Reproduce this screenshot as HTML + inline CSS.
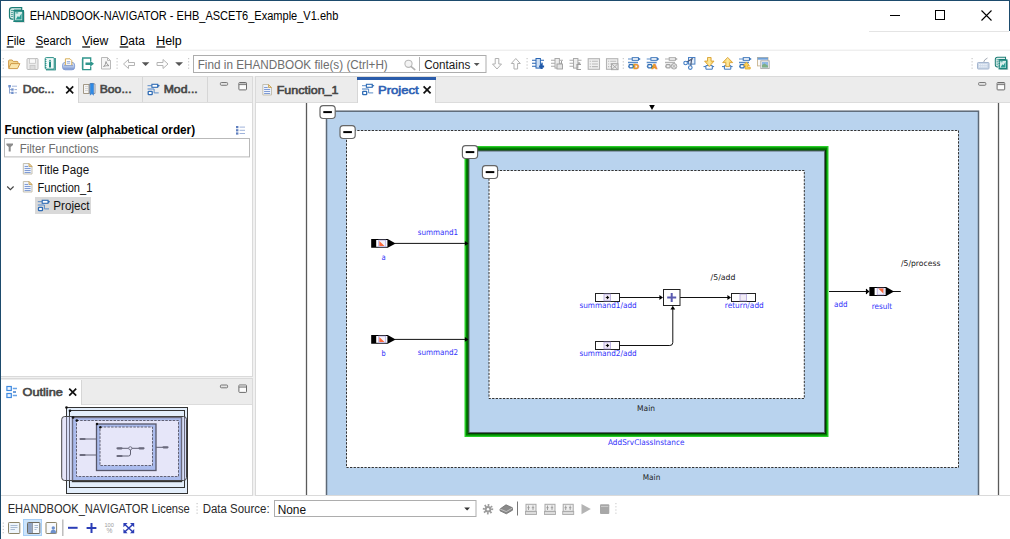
<!DOCTYPE html>
<html lang="en">
<head>
<meta charset="utf-8">
<title>EHANDBOOK-NAVIGATOR - EHB_ASCET6_Example_V1.ehb</title>
<style>
html,body{margin:0;padding:0;background:#fff;}
body{width:1010px;height:539px;overflow:hidden;position:relative;font-family:"Liberation Sans", sans-serif;}
#win{position:absolute;left:0;top:0;width:1010px;height:539px;overflow:hidden;background:#fff;}
#win div{position:absolute;}
svg{position:absolute;left:0;top:0;font-family:"Liberation Sans", sans-serif;}
svg text{white-space:pre;}
#editor{position:absolute;left:256px;top:103px;width:754px;height:392px;overflow:hidden;}
#editor svg{left:-256px;top:-103px;}
</style>
</head>
<body>
<div id="win">
<div style="left:869px;top:31px;width:140px;height:1px;background:#e4e4e4;"></div>
<div class="workbench" style="left:1px;top:76px;width:1009px;height:420px;background:#f1f1f1;"></div>
<div style="left:1px;top:49px;width:1009px;height:1px;background:#f8f8f8;"></div>
<div style="left:1px;top:50px;width:1009px;height:1px;background:#efefef;"></div>
<div class="panel" style="left:0px;top:76px;width:253px;height:301px;background:#fff;border:1px solid #dadada;box-sizing:border-box"><div class="tabbar" style="left:0;top:0;width:100%;height:26px;background:#ececec;border-bottom:1px solid #dcdcdc;box-sizing:border-box"></div></div>
<div class="panel" style="left:0px;top:378px;width:253px;height:118px;background:#fff;border:1px solid #dadada;box-sizing:border-box"><div class="tabbar" style="left:0;top:0;width:100%;height:26px;background:#ececec;border-bottom:1px solid #dcdcdc;box-sizing:border-box"></div></div>
<div class="panel" style="left:255px;top:76px;width:760px;height:420px;background:#fff;border:1px solid #dadada;box-sizing:border-box"><div class="tabbar" style="left:0;top:0;width:100%;height:26px;background:#ececec;border-bottom:1px solid #dcdcdc;box-sizing:border-box"></div></div>
<div class="tab active" style="left:1px;top:78px;width:78px;height:25px;background:#fff;border-right:1px solid #d6d6d6;box-sizing:border-box"></div>
<div class="tab active" style="left:1px;top:380px;width:81px;height:25px;background:#fff;border-right:1px solid #d6d6d6;box-sizing:border-box"></div>
<div class="tab active" style="left:357px;top:77px;width:79px;height:26px;background:#fff;border-right:1px solid #d6d6d6;border-left:1px solid #d6d6d6;box-sizing:border-box"></div>
<div style="left:357px;top:77px;width:79px;height:3px;background:#2a5caa;"></div>
<div style="left:142px;top:77px;width:1px;height:25px;background:#d6d6d6;"></div>
<div style="left:207px;top:77px;width:1px;height:25px;background:#d6d6d6;"></div>
<div class="statusbar" style="left:1px;top:496px;width:1009px;height:43px;background:#fff;"></div>
<div class="selected" style="left:35px;top:197px;width:56px;height:17px;background:#d9d9d9"></div>
<div class="winborder" style="left:0px;top:0px;width:1010px;height:1px;background:#1d4b6d;"></div>
<div class="winborder" style="left:0px;top:0px;width:1px;height:539px;background:#1d4b6d;"></div>
<div class="winborder" style="left:1009px;top:0px;width:1px;height:31px;background:#1d4b6d;"></div>
<div id="editor">
<svg width="1010" height="539" viewBox="0 0 1010 539">
<path d="M306.5 103v392M998.5 103v392" stroke="#5a5a5a" stroke-width="1.3"/>
<path d="M649.2 104.9h5.6l-2.8 5.2z" fill="#000"/>
<rect x="326.5" y="111.2" width="652" height="400" fill="#b9d3ee" stroke="#5c6876" stroke-width="1.5"/>
<rect x="346.5" y="130.5" width="612" height="337" fill="#fff" stroke="#333" stroke-width="1" stroke-dasharray="2.3 1.3"/>
<rect x="464.5" y="146" width="364" height="291" fill="#28d028"/>
<rect x="465.9" y="147.4" width="361.3" height="288.2" fill="#008000"/>
<rect x="468.2" y="150.2" width="357.3" height="283.3" fill="none" stroke="#063806" stroke-width="1"/>
<rect x="469" y="151" width="355.5" height="281.5" fill="#b9d3ee" stroke="#5a6672" stroke-width="1"/>
<rect x="489" y="170.5" width="315.3" height="228" fill="#fff" stroke="#333" stroke-width="1" stroke-dasharray="2.3 1.3"/>
<rect x="320.0" y="105.69999999999999" width="15.2" height="12.8" rx="3.2" fill="#fff" stroke="#666" stroke-width="1.2"/><path d="M323.3 112.1h8.6" stroke="#000" stroke-width="2"/>
<rect x="340.0" y="125.69999999999999" width="15.2" height="12.8" rx="3.2" fill="#fff" stroke="#666" stroke-width="1.2"/><path d="M343.3 132.1h8.6" stroke="#000" stroke-width="2"/>
<rect x="462.4" y="145.7" width="15.2" height="12.8" rx="3.2" fill="#fff" stroke="#666" stroke-width="1.2"/><path d="M465.7 152.1h8.6" stroke="#000" stroke-width="2"/>
<rect x="482.4" y="165.7" width="15.2" height="12.8" rx="3.2" fill="#fff" stroke="#666" stroke-width="1.2"/><path d="M485.7 172.1h8.6" stroke="#000" stroke-width="2"/>
<g transform="translate(371,243.4)"><path d="M0.2 -4.4h16.5l8 4.4-8 4.4h-16.5z" fill="#000"/><rect x="5.2" y="-3.4" width="11.2" height="6.8" fill="#fff"/><rect x="7.7" y="-3.3" width="7" height="6.6" fill="#f4f2fa" stroke="#b4ace2" stroke-width="0.8"/><path d="M8.3 -2.4v5h5.2z" fill="#fa6a3c"/></g>
<g transform="translate(371,339.4)"><path d="M0.2 -4.4h16.5l8 4.4-8 4.4h-16.5z" fill="#000"/><rect x="5.2" y="-3.4" width="11.2" height="6.8" fill="#fff"/><rect x="7.7" y="-3.3" width="7" height="6.6" fill="#f4f2fa" stroke="#b4ace2" stroke-width="0.8"/><path d="M8.3 -2.4v5h5.2z" fill="#fa6a3c"/></g>
<path d="M395 243.4h70M395 339.4h70" stroke="#111" stroke-width="1"/>
<path d="M468.5 243.4l-3.6-2.4v4.8zM468.5 339.4l-3.6-2.4v4.8z" fill="#000"/>
<text x="417.8" y="235" font-size="7.9" font-family="DejaVu Sans Condensed, DejaVu Sans, sans-serif" fill="#3232fa" textLength="40.4" lengthAdjust="spacingAndGlyphs">summand1</text>
<text x="381.4" y="259.8" font-size="7.9" font-family="DejaVu Sans Condensed, DejaVu Sans, sans-serif" fill="#3232fa" textLength="4.2" lengthAdjust="spacingAndGlyphs">a</text>
<text x="417.8" y="355" font-size="7.9" font-family="DejaVu Sans Condensed, DejaVu Sans, sans-serif" fill="#3232fa" textLength="40.4" lengthAdjust="spacingAndGlyphs">summand2</text>
<text x="381.4" y="356.3" font-size="7.9" font-family="DejaVu Sans Condensed, DejaVu Sans, sans-serif" fill="#3232fa" textLength="4.2" lengthAdjust="spacingAndGlyphs">b</text>
<rect x="595.5" y="293.5" width="24" height="8" fill="#fff" stroke="#222" stroke-width="1"/><rect x="604" y="294.1" width="6.6" height="6.8" fill="#f2ecf6" stroke="#b0a4dc" stroke-width="0.8"/>
<path d="M605.8 297.5h2.2" stroke="#000" stroke-width="0.9"/><path d="M609.3 297.5l-2.4-1.9v3.8z" fill="#000"/>
<rect x="595.5" y="341.5" width="24" height="8" fill="#fff" stroke="#222" stroke-width="1"/><rect x="604" y="342.1" width="6.6" height="6.8" fill="#f2ecf6" stroke="#b0a4dc" stroke-width="0.8"/>
<path d="M605.8 345.5h2.2" stroke="#000" stroke-width="0.9"/><path d="M609.3 345.5l-2.4-1.9v3.8z" fill="#000"/>
<rect x="731.5" y="293.5" width="24" height="8" fill="#fff" stroke="#222" stroke-width="1"/><rect x="740" y="294.1" width="6.6" height="6.8" fill="#f2ecf6" stroke="#b0a4dc" stroke-width="0.8"/>
<path d="M619.5 297.5h41M680 297.5h48.5" stroke="#111" stroke-width="1"/>
<path d="M663 297.5l-3.6-2.4v4.8zM731 297.5l-3.6-2.4v4.8z" fill="#000"/>
<rect x="663.5" y="289.5" width="16.5" height="16" fill="#fff" stroke="#222" stroke-width="1"/>
<path d="M667.2 297.5h9M671.7 293v9" stroke="#5a5ab0" stroke-width="2"/>
<path d="M619.5 345.5h50.3q3 0 3-3v-34" stroke="#111" stroke-width="1" fill="none"/>
<path d="M672.8 305.8l-2.4 3.6h4.8z" fill="#000"/>
<text x="579.4" y="308.4" font-size="7.9" font-family="DejaVu Sans Condensed, DejaVu Sans, sans-serif" fill="#3232fa" textLength="57.3" lengthAdjust="spacingAndGlyphs">summand1/add</text>
<text x="579.4" y="356.4" font-size="7.9" font-family="DejaVu Sans Condensed, DejaVu Sans, sans-serif" fill="#3232fa" textLength="57.3" lengthAdjust="spacingAndGlyphs">summand2/add</text>
<text x="710.6" y="279.8" font-size="7.9" font-family="DejaVu Sans Condensed, DejaVu Sans, sans-serif" fill="#222" textLength="24.9" lengthAdjust="spacingAndGlyphs">/5/add</text>
<text x="724.8" y="308.4" font-size="7.9" font-family="DejaVu Sans Condensed, DejaVu Sans, sans-serif" fill="#3232fa" textLength="39.0" lengthAdjust="spacingAndGlyphs">return/add</text>
<path d="M829 291.5h38M892 291.5h8.8" stroke="#111" stroke-width="1"/>
<path d="M869.6 291.5l-3.4-2.4v4.8z" fill="#000"/><path d="M866.5 288.9v5.2" stroke="#000" stroke-width="1.2"/>
<g transform="translate(869.2,291.5)"><path d="M0.2 -4.5h16.8l7.8 4.5-7.8 4.5h-16.8z" fill="#000"/><rect x="5.4" y="-3.5" width="11" height="7" fill="#fff"/><rect x="8" y="-3.3" width="6.8" height="6.6" fill="#f4f2fa" stroke="#b4ace2" stroke-width="0.8"/><path d="M9.1 -3h5v5z" fill="#fa6a3c"/></g>
<text x="834.0" y="306.6" font-size="7.9" font-family="DejaVu Sans Condensed, DejaVu Sans, sans-serif" fill="#3232fa" textLength="13.5" lengthAdjust="spacingAndGlyphs">add</text>
<text x="871.8" y="308.6" font-size="7.9" font-family="DejaVu Sans Condensed, DejaVu Sans, sans-serif" fill="#3232fa" textLength="20.4" lengthAdjust="spacingAndGlyphs">result</text>
<text x="901.0" y="265.8" font-size="7.9" font-family="DejaVu Sans Condensed, DejaVu Sans, sans-serif" fill="#222" textLength="39.4" lengthAdjust="spacingAndGlyphs">/5/process</text>
<text x="637.1" y="411" font-size="7.9" font-family="DejaVu Sans Condensed, DejaVu Sans, sans-serif" fill="#222" textLength="17.9" lengthAdjust="spacingAndGlyphs">Main</text>
<text x="608.0" y="445.3" font-size="7.9" font-family="DejaVu Sans Condensed, DejaVu Sans, sans-serif" fill="#3232fa" textLength="76.5" lengthAdjust="spacingAndGlyphs">AddSrvClassInstance</text>
<text x="642.8" y="479.7" font-size="7.9" font-family="DejaVu Sans Condensed, DejaVu Sans, sans-serif" fill="#222" textLength="17.5" lengthAdjust="spacingAndGlyphs">Main</text>
</svg>
</div>
<svg id="ui" width="1010" height="539" viewBox="0 0 1010 539">
<text x="29.7" y="20" font-size="12" font-weight="normal" fill="#000" textLength="308.6" lengthAdjust="spacingAndGlyphs">EHANDBOOK-NAVIGATOR - EHB_ASCET6_Example_V1.ehb</text>
<path d="M890 15.5h10" stroke="#000" stroke-width="1" fill="none"/>
<rect x="935.5" y="10.5" width="9" height="9" stroke="#000" stroke-width="1" fill="none"/>
<path d="M981.5 10.5l10 10M991.5 10.5l-10 10" stroke="#000" stroke-width="1.1" fill="none"/>
<g transform="translate(8.3,7) scale(1)"><rect x="7" y="4.5" width="9.6" height="11.2" fill="#d4d4d4"/><path d="M1.2 3.2q0-2.6 2.6-2.6h9.6v2.6h-7v9h-2.6q-2.6 0-2.6-2.6z" fill="#e3f1ef" stroke="#1c7d75" stroke-width="1.2"/><path d="M2.6 3.4h3.4M2.6 5.4h2.6M2.6 7.4h2.6M2.6 9.4h2.6" stroke="#3c978f" stroke-width="0.9"/><rect x="5.9" y="3.9" width="8.9" height="10.2" fill="#d9eeeb" stroke="#1c837b" stroke-width="1.8"/><path d="M7.4 12.6l2.2-3.6 1.3 1.2 2.4-4v6.4z" fill="#2a9d94"/><path d="M7.3 5.9h2.6" stroke="#2a9d94" stroke-width="1"/><path d="M5.4 4.5v9.5" stroke="#fff" stroke-width="1.1" stroke-dasharray="1 1"/></g>
<text x="6.7" y="45.4" font-size="12" font-weight="normal" fill="#000" textLength="18.6" lengthAdjust="spacingAndGlyphs"><tspan text-decoration="underline">F</tspan>ile</text>
<text x="35.7" y="45.4" font-size="12" font-weight="normal" fill="#000" textLength="35.6" lengthAdjust="spacingAndGlyphs"><tspan text-decoration="underline">S</tspan>earch</text>
<text x="82.2" y="45.4" font-size="12" font-weight="normal" fill="#000" textLength="26.1" lengthAdjust="spacingAndGlyphs"><tspan text-decoration="underline">V</tspan>iew</text>
<text x="119.7" y="45.4" font-size="12" font-weight="normal" fill="#000" textLength="25.1" lengthAdjust="spacingAndGlyphs"><tspan text-decoration="underline">D</tspan>ata</text>
<text x="156.2" y="45.4" font-size="12" font-weight="normal" fill="#000" textLength="25.6" lengthAdjust="spacingAndGlyphs"><tspan text-decoration="underline">H</tspan>elp</text>
<g transform="translate(8,59)"><path d="M0.6 8.8v-6.8q0-1 1-1h2.6l1 1.4h3.8q1 0 1 1v1.2" fill="#f5d890" stroke="#c9923c" stroke-width="0.9"/><path d="M0.7 9.6l2.2-5h9l-2.4 5z" fill="#fbe6ac" stroke="#c9923c" stroke-width="0.9" stroke-linejoin="round"/></g>
<g transform="translate(26.5,58)"><rect x="0.5" y="0.5" width="11" height="11" rx="1" fill="#ececec" stroke="#bdbdbd"/><rect x="3" y="0.8" width="6" height="4.5" fill="#fafafa" stroke="#c4c4c4" stroke-width="0.8"/><rect x="3.5" y="7.5" width="5" height="4" fill="#dcdcdc" stroke="#c4c4c4" stroke-width="0.8"/></g>
<g transform="translate(44,57)"><rect x="2.5" y="1.5" width="9" height="11.5" fill="#7cbcb6" stroke="#2c8c84" stroke-width="0.8"/><rect x="1.2" y="0.6" width="9" height="11.5" rx="1" fill="#f2faf9" stroke="#2a9088" stroke-width="1"/><path d="M1 2.5h1.5M1 4.5h1.5M1 6.5h1.5M1 8.5h1.5M1 10.5h1.5" stroke="#1f8a82" stroke-width="0.8"/><rect x="5" y="5" width="2" height="5.5" fill="#1f8a82"/><path d="M4.6 4.6l1.4-2 1.4 2z" fill="#1f8a82"/></g>
<defs><linearGradient id="pg" x1="0" y1="0" x2="0" y2="1"><stop offset="0" stop-color="#e6edf9"/><stop offset="0.55" stop-color="#b4c6e8"/><stop offset="1" stop-color="#6f8ccc"/></linearGradient></defs>
<g transform="translate(62,58)"><rect x="0.6" y="4.4" width="12" height="7.4" rx="2.6" fill="url(#pg)" stroke="#7f9ad2" stroke-width="0.9"/><path d="M3.4 7.4v-6.6h4.6l1.8 1.8v4.8z" fill="#fff" stroke="#d2a545" stroke-width="0.9"/><path d="M4.8 3.6h3.4M4.8 5.2h3.4" stroke="#8aa2d4" stroke-width="0.9"/><path d="M2.2 7.6h8.8" stroke="#8ea4d4" stroke-width="1"/></g>
<g transform="translate(81,57)"><path d="M9.7 4v-3h-8v11.6h8v-3" fill="#fff" stroke="#2f958c" stroke-width="1.3"/><path d="M0.6 3h1.8M0.6 5h1.8M0.6 7h1.8M0.6 9h1.8M0.6 11h1.8" stroke="#2f958c" stroke-width="0.8"/><path d="M4.5 5.6h4.7v-1.8l3.8 3-3.8 3v-1.8h-4.7z" fill="#2f958c"/></g>
<g transform="translate(101,57)"><path d="M0.5 0.5h6l3 3v8.5h-9z" fill="#f6f6f6" stroke="#b9b9b9"/><path d="M6.5 0.5v3h3" fill="none" stroke="#b9b9b9"/><path d="M2.5 9.5q2-1 2.5-5q0.5 3 3 4.2q-3-0.3-5.5 0.8z" fill="none" stroke="#8c8c8c" stroke-width="0.8"/></g>
<rect x="116.5" y="58.0" width="1.2" height="1.2" fill="#c8c8c8"/>
<rect x="116.5" y="61.2" width="1.2" height="1.2" fill="#c8c8c8"/>
<rect x="116.5" y="64.4" width="1.2" height="1.2" fill="#c8c8c8"/>
<rect x="116.5" y="67.6" width="1.2" height="1.2" fill="#c8c8c8"/>
<rect x="2.7" y="58.0" width="1.2" height="1.2" fill="#c8c8c8"/>
<rect x="2.7" y="61.2" width="1.2" height="1.2" fill="#c8c8c8"/>
<rect x="2.7" y="64.4" width="1.2" height="1.2" fill="#c8c8c8"/>
<rect x="2.7" y="67.6" width="1.2" height="1.2" fill="#c8c8c8"/>
<g transform="translate(123,59)"><path d="M0.5 5l5-4.5v3h6v3h-6v3z" fill="#fdfdfd" stroke="#b4b4b4" stroke-width="1" stroke-linejoin="round"/></g>
<path d="M141.8 62.2h7.599999999999994l-3.799999999999997 3.799999999999997z" fill="#555"/>
<g transform="translate(168.5,59) scale(-1,1)"><path d="M0.5 5l5-4.5v3h6v3h-6v3z" fill="#fdfdfd" stroke="#b4b4b4" stroke-width="1" stroke-linejoin="round"/></g>
<path d="M175.2 62.2h7.800000000000011l-3.9000000000000057 3.9000000000000057z" fill="#555"/>
<rect x="188.0" y="58.0" width="1.2" height="1.2" fill="#c8c8c8"/>
<rect x="188.0" y="61.2" width="1.2" height="1.2" fill="#c8c8c8"/>
<rect x="188.0" y="64.4" width="1.2" height="1.2" fill="#c8c8c8"/>
<rect x="188.0" y="67.6" width="1.2" height="1.2" fill="#c8c8c8"/>
<rect x="193.5" y="55.5" width="292.5" height="17" fill="#fff" stroke="#adadad"/>
<text x="197.7" y="69" font-size="12" font-weight="normal" fill="#6e6e6e" textLength="190.1" lengthAdjust="spacingAndGlyphs">Find in EHANDBOOK file(s) (Ctrl+H)</text>
<circle cx="408.5" cy="63.8" r="3.6" fill="#f4f4f4" stroke="#b9b9b9" stroke-width="1.1"/><path d="M411.2 66.6l3.6 3" stroke="#b0b0b0" stroke-width="1.6" stroke-linecap="round"/>
<path d="M419.5 57v14" stroke="#b4b4b4"/>
<text x="424.2" y="69" font-size="12" font-weight="normal" fill="#1a1a1a" textLength="46.1" lengthAdjust="spacingAndGlyphs">Contains</text>
<path d="M473.8 63h5.800000000000011l-2.9000000000000057 2.9000000000000057z" fill="#555"/>
<g transform="translate(492,58)"><path d="M5 11l-4.5-5h2.7v-5.5h3.6v5.5h2.7z" fill="#fdfdfd" stroke="#b0b0b0" stroke-width="1" stroke-linejoin="round"/></g>
<g transform="translate(510.8,69.5) scale(1,-1)"><path d="M5 11l-4.5-5h2.7v-5.5h3.6v5.5h2.7z" fill="#fdfdfd" stroke="#b0b0b0" stroke-width="1" stroke-linejoin="round"/></g>
<rect x="526.5" y="58.0" width="1.2" height="1.2" fill="#c8c8c8"/>
<rect x="526.5" y="61.2" width="1.2" height="1.2" fill="#c8c8c8"/>
<rect x="526.5" y="64.4" width="1.2" height="1.2" fill="#c8c8c8"/>
<rect x="526.5" y="67.6" width="1.2" height="1.2" fill="#c8c8c8"/>
<g transform="translate(532,58)"><path d="M0 2.2h4M0 5.2h4M0 8.2h4M8 2.2h4M8 5.2h3" stroke="#2a66b4" stroke-width="1.1"/><rect x="4" y="0.5" width="4.4" height="9.6" fill="#cfe0f4" stroke="#2a66b4" stroke-width="1"/><path d="M9.6 6v5M7.1 8.5h5" stroke="#1f58a8" stroke-width="2.2"/></g>
<g transform="translate(551,58)"><path d="M0 2.2h4M0 5.2h4M0 8.2h4M8 2.2h4M8 5.2h3" stroke="#aaaaaa" stroke-width="1.1"/><rect x="4" y="0.5" width="4.4" height="9.6" fill="#ededed" stroke="#aaaaaa" stroke-width="1"/><rect x="6" y="6" width="5.5" height="5" fill="#e4e4e4" stroke="#9c9c9c" stroke-width="0.9"/><path d="M10.5 3v3" stroke="#9c9c9c" stroke-width="1"/></g>
<g transform="translate(569.5,58)"><path d="M0 2.2h4M0 5.2h4M0 8.2h4M8 2.2h4M8 5.2h3" stroke="#aaaaaa" stroke-width="1.1"/><rect x="4" y="0.5" width="4.4" height="9.6" fill="#ededed" stroke="#aaaaaa" stroke-width="1"/><path d="M11.5 6.5h-4v5h4M9.5 4v2.5" fill="none" stroke="#9c9c9c" stroke-width="1.1"/></g>
<g transform="translate(587.7,58.2)"><rect x="0.5" y="0.5" width="11.3" height="10.6" fill="#f0f0f0" stroke="#b4b4b4" stroke-width="1.1"/><path d="M2 3h1.2M4.2 3h6M2 5.8h1.2M4.2 5.8h6M2 8.4h1.2M4.2 8.4h6" stroke="#b9b9b9" stroke-width="1.1"/></g>
<g transform="translate(606,58.2)"><rect x="0.5" y="0.5" width="11.3" height="10.6" fill="#f0f0f0" stroke="#b4b4b4" stroke-width="1.1"/><path d="M2 3h1.2M4.2 3h6M2 5.8h1.2M4.2 5.8h6M2 8.4h1.2M4.2 8.4h6" stroke="#b9b9b9" stroke-width="1.1"/><rect x="5.5" y="5.5" width="6.5" height="6" fill="#e9e9e9" stroke="#a4a4a4" stroke-width="0.9"/><path d="M6 6l5.5 5M11.5 6l-5.5 5" stroke="#a4a4a4" stroke-width="0.9"/></g>
<rect x="622.7" y="58.0" width="1.2" height="1.2" fill="#c8c8c8"/>
<rect x="622.7" y="61.2" width="1.2" height="1.2" fill="#c8c8c8"/>
<rect x="622.7" y="64.4" width="1.2" height="1.2" fill="#c8c8c8"/>
<rect x="622.7" y="67.6" width="1.2" height="1.2" fill="#c8c8c8"/>
<g transform="translate(628,57)"><path d="M0 2h12.4" stroke="#5a8cc8" stroke-width="1" fill="none"/><rect x="4.2" y="0.7" width="6.2" height="2.6" fill="#fff" stroke="#2f6cb5" stroke-width="0.95"/><path d="M10.4 0.6l1.8 1.4-1.8 1.4z" fill="#2f6cb5"/><path d="M0 5.5h10" stroke="#5a8cc8" stroke-width="1.5" fill="none"/><path d="M0 9.3h7" stroke="#5a8cc8" stroke-width="1" fill="none"/><rect x="1.1" y="7.7" width="4" height="3.2" rx="0.7" fill="#fff" stroke="#2f6cb5" stroke-width="1.2"/><text x="5.4" y="12.2" font-size="7.8" font-weight="bold" fill="#ee9a30" stroke="#e8922a" stroke-width="0.7">D</text></g>
<g transform="translate(646.7,57)"><path d="M0 2h12.4" stroke="#5a8cc8" stroke-width="1" fill="none"/><rect x="4.2" y="0.7" width="6.2" height="2.6" fill="#fff" stroke="#2f6cb5" stroke-width="0.95"/><path d="M10.4 0.6l1.8 1.4-1.8 1.4z" fill="#2f6cb5"/><path d="M0 5.5h10" stroke="#5a8cc8" stroke-width="1.5" fill="none"/><path d="M0 9.3h7" stroke="#5a8cc8" stroke-width="1" fill="none"/><rect x="1.1" y="7.7" width="4" height="3.2" rx="0.7" fill="#fff" stroke="#2f6cb5" stroke-width="1.2"/><text x="5" y="12.3" font-size="7.8" font-weight="bold" fill="#ee9a30" stroke="#e8922a" stroke-width="0.7">A</text></g>
<g transform="translate(665,57)"><path d="M0 2h12.4" stroke="#b4b4b4" stroke-width="1" fill="none"/><rect x="4.2" y="0.7" width="6.2" height="2.6" fill="#f2f2f2" stroke="#a4a4a4" stroke-width="0.95"/><path d="M10.4 0.6l1.8 1.4-1.8 1.4z" fill="#a4a4a4"/><path d="M0 5.5h10" stroke="#b4b4b4" stroke-width="1.5" fill="none"/><path d="M0 9.3h7" stroke="#b4b4b4" stroke-width="1" fill="none"/><rect x="1.1" y="7.7" width="4" height="3.2" rx="0.7" fill="#f2f2f2" stroke="#a4a4a4" stroke-width="1.2"/><circle cx="9" cy="9.3" r="2.8" fill="#e6e6e6" stroke="#a4a4a4" stroke-width="0.9"/><path d="M7 7.3l4 4M11 7.3l-4 4" stroke="#a4a4a4" stroke-width="0.8"/></g>
<g transform="translate(683.3,57)"><rect x="5.2" y="0.5" width="6.4" height="6.6" fill="#e4eefa" stroke="#4a80c4" stroke-width="1"/><path d="M3.4 5l6.2-3.6M7.4 9.2l1-8" stroke="#4c5a78" stroke-width="1.2"/><circle cx="2.3" cy="6" r="1.8" fill="#fff" stroke="#3f7cc4" stroke-width="1.1"/><circle cx="7" cy="10.6" r="1.8" fill="#fff" stroke="#3f7cc4" stroke-width="1.1"/></g>
<defs><linearGradient id="yg" x1="0" y1="0" x2="1" y2="0"><stop offset="0" stop-color="#f8c848"/><stop offset="0.5" stop-color="#fdeaa0"/><stop offset="1" stop-color="#f6c040"/></linearGradient></defs>
<g transform="translate(703.5,57)"><path d="M2.4 8.6h6.4v3.6h-6.4z" fill="#fff" stroke="#3b76bd" stroke-width="1"/><path d="M0 9.6h2.4M8.8 9.6h1.8" stroke="#3b76bd" stroke-width="1"/><path d="M4 0.5h3.6v3.6h2.9l-4.7 5.4-4.7-5.4h2.9z" fill="url(#yg)" stroke="#d9a234" stroke-width="0.9" stroke-linejoin="round"/></g>
<g transform="translate(722,57)"><path d="M2.4 8.6h6.4v3.6h-6.4z" fill="#fff" stroke="#3b76bd" stroke-width="1"/><path d="M0 9.6h2.4M8.8 9.6h1.8" stroke="#3b76bd" stroke-width="1"/><path d="M3.8 9.6h3.8v-4h3.1l-5-5.2-5 5.2h3.1z" fill="url(#yg)" stroke="#d9a234" stroke-width="0.9" stroke-linejoin="round"/></g>
<g transform="translate(739,57)"><path d="M0 2h12.4" stroke="#5a8cc8" stroke-width="1" fill="none"/><rect x="4.2" y="0.7" width="6.2" height="2.6" fill="#fff" stroke="#2f6cb5" stroke-width="0.95"/><path d="M10.4 0.6l1.8 1.4-1.8 1.4z" fill="#2f6cb5"/><path d="M0 5.5h10" stroke="#5a8cc8" stroke-width="1.5" fill="none"/><path d="M0 9.3h7" stroke="#5a8cc8" stroke-width="1" fill="none"/><rect x="1.1" y="7.7" width="4" height="3.2" rx="0.7" fill="#fff" stroke="#2f6cb5" stroke-width="1.2"/><path d="M6.2 12v-3.5h-1.8l3-3.4 3 3.4h-1.8v1.6h2.6v1.9z" fill="#fbd25a" stroke="#dfa62c" stroke-width="0.8" stroke-linejoin="round"/></g>
<g transform="translate(757,57)"><rect x="0.5" y="0.5" width="10.5" height="8.4" fill="#fafafa" stroke="#c9b591" stroke-width="0.9"/><rect x="0.5" y="0.5" width="10.5" height="2.2" fill="#6fa0d8"/><rect x="3.8" y="3.8" width="8.4" height="7.8" fill="#f0f0f0" stroke="#a9a9a9" stroke-width="0.9"/><rect x="5" y="5" width="6" height="5.4" fill="#8fb8e4"/><path d="M5 10.4v-2.4l2.5-1.6 3.5 2.4v1.6z" fill="#7fae86"/></g>
<rect x="971.5" y="58.0" width="1.2" height="1.2" fill="#c8c8c8"/>
<rect x="971.5" y="61.2" width="1.2" height="1.2" fill="#c8c8c8"/>
<rect x="971.5" y="64.4" width="1.2" height="1.2" fill="#c8c8c8"/>
<rect x="971.5" y="67.6" width="1.2" height="1.2" fill="#c8c8c8"/>
<g transform="translate(977,57)"><path d="M6.5 5.5q0.5-3 4-4.5" fill="none" stroke="#a4aab4" stroke-width="1"/><rect x="0.5" y="5.5" width="11.5" height="6.5" rx="0.8" fill="#ccd8e8" stroke="#a5b6cf" stroke-width="1"/><path d="M2 7.6h8.5M2 9.8h8.5" stroke="#eef3fa" stroke-width="1.1" stroke-dasharray="1.4 0.7"/></g>
<g transform="translate(994.3,56.8) scale(0.84)"><rect x="7" y="4.5" width="9.6" height="11.2" fill="#d4d4d4"/><path d="M1.2 3.2q0-2.6 2.6-2.6h9.6v2.6h-7v9h-2.6q-2.6 0-2.6-2.6z" fill="#e3f1ef" stroke="#1c7d75" stroke-width="1.2"/><path d="M2.6 3.4h3.4M2.6 5.4h2.6M2.6 7.4h2.6M2.6 9.4h2.6" stroke="#3c978f" stroke-width="0.9"/><rect x="5.9" y="3.9" width="8.9" height="10.2" fill="#d9eeeb" stroke="#1c837b" stroke-width="1.8"/><path d="M7.4 12.6l2.2-3.6 1.3 1.2 2.4-4v6.4z" fill="#2a9d94"/><path d="M7.3 5.9h2.6" stroke="#2a9d94" stroke-width="1"/><path d="M5.4 4.5v9.5" stroke="#fff" stroke-width="1.1" stroke-dasharray="1 1"/></g>
<g transform="translate(8,85)"><path d="M1.5 1v7.5M1.5 4.6h2M1.5 7.8h2" stroke="#8fa6d2" stroke-width="1" fill="none"/><rect x="0.3" y="0" width="2.6" height="2.4" fill="#6f8fca"/><rect x="3.2" y="3.4" width="2.4" height="2.3" fill="#6f8fca"/><rect x="3.2" y="6.7" width="2.4" height="2.3" fill="#6f8fca"/><path d="M4 1.2h5M6.5 4.6h2.5M6.5 7.8h2.5" stroke="#9db1d8" stroke-width="1"/></g>
<text x="22.7" y="93.4" font-size="11.5" font-weight="normal" fill="#464646" textLength="31.6" lengthAdjust="spacingAndGlyphs" stroke="#464646" stroke-width="0.6">Doc...</text>
<path d="M66.2 86.3l7 7M73.2 86.3l-7 7" stroke="#111" stroke-width="1.7" fill="none"/>
<g transform="translate(83,83)"><path d="M0.5 1.5h5.5v9h-5.5z" fill="#f4f4f4" stroke="#9a8f7a" stroke-width="0.9"/><path d="M2 3.5h3M2 5.5h3M2 7.5h3" stroke="#cfcfcf" stroke-width="0.8"/><path d="M6.5 1q2.5-1.2 5.5 0v9.5q-3-1-5.5 0z" fill="#dfe9f5" stroke="#8a8f98" stroke-width="0.9"/><path d="M7.3 0.6h3.2v11.6l-1.6-1.6-1.6 1.6z" fill="#2f8be6" stroke="#2a6fc0" stroke-width="0.5"/></g>
<text x="99.7" y="93.4" font-size="11.5" font-weight="normal" fill="#464646" textLength="31.9" lengthAdjust="spacingAndGlyphs" stroke="#464646" stroke-width="0.6">Boo...</text>
<g transform="translate(147.5,84)"><path d="M0 1.7h12.2" stroke="#5a8cc8" stroke-width="1" fill="none"/><rect x="4.4" y="0.3" width="5.8" height="3" fill="#fff" stroke="#2f6cb5" stroke-width="1.1"/><path d="M10.2 0.3l1.8 1.4-1.8 1.5z" fill="#2f6cb5"/><path d="M0 5h6.6" stroke="#7fa6d6" stroke-width="1.5" fill="none"/><path d="M6.6 5v3.9h4.6" stroke="#5a8cc8" stroke-width="1" fill="none"/><rect x="0.7" y="7.4" width="4" height="3.2" rx="0.6" fill="#fff" stroke="#2f6cb5" stroke-width="1.3"/></g>
<text x="163.7" y="93.4" font-size="11.5" font-weight="normal" fill="#464646" textLength="34.0" lengthAdjust="spacingAndGlyphs" stroke="#464646" stroke-width="0.6">Mod...</text>
<rect x="220.4" y="82.5" width="7.2" height="2.8" rx="0.9" fill="#e4e4e4" stroke="#787878" stroke-width="1"/>
<rect x="238.9" y="82.5" width="7.6" height="7.4" rx="0.7" fill="#fcfcfc" stroke="#6c6c6c" stroke-width="1"/><path d="M239.4 83.5h6.6" stroke="#c4c4c4" stroke-width="1"/><path d="M238.9 84.6h7.6" stroke="#6c6c6c" stroke-width="0.9"/>
<g transform="translate(262.3,84)"><path d="M0.5 0.5h5.7l3 3v7.5h-8.7z" fill="#eef3fc" stroke="#c5c0b0" stroke-width="1"/><path d="M6.2 0.5v3h3z" fill="#f1dfb0" stroke="#c9a55a" stroke-width="0.9"/><path d="M1.8 3.5h3.6M1.8 5.5h6M1.8 7.5h6M1.8 9.5h6" stroke="#7f9bd4" stroke-width="1.15"/></g>
<text x="276.7" y="93.6" font-size="11.5" font-weight="normal" fill="#464646" textLength="61.8" lengthAdjust="spacingAndGlyphs" stroke="#464646" stroke-width="0.6">Function_1</text>
<g transform="translate(362,84)"><path d="M0 1.7h12.2" stroke="#5a8cc8" stroke-width="1" fill="none"/><rect x="4.4" y="0.3" width="5.8" height="3" fill="#fff" stroke="#2f6cb5" stroke-width="1.1"/><path d="M10.2 0.3l1.8 1.4-1.8 1.5z" fill="#2f6cb5"/><path d="M0 5h6.6" stroke="#7fa6d6" stroke-width="1.5" fill="none"/><path d="M6.6 5v3.9h4.6" stroke="#5a8cc8" stroke-width="1" fill="none"/><rect x="0.7" y="7.4" width="4" height="3.2" rx="0.6" fill="#fff" stroke="#2f6cb5" stroke-width="1.3"/></g>
<text x="378.0" y="93.6" font-size="11.5" font-weight="normal" fill="#2d5fb4" textLength="40.7" lengthAdjust="spacingAndGlyphs" stroke="#2d5fb4" stroke-width="0.6">Project</text>
<path d="M423.6 86.3l7 7M430.6 86.3l-7 7" stroke="#111" stroke-width="1.7" fill="none"/>
<rect x="978.6" y="82.5" width="7.2" height="2.8" rx="0.9" fill="#e4e4e4" stroke="#787878" stroke-width="1"/>
<rect x="997.1" y="82.5" width="7.6" height="7.4" rx="0.7" fill="#fcfcfc" stroke="#6c6c6c" stroke-width="1"/><path d="M997.6 83.5h6.6" stroke="#c4c4c4" stroke-width="1"/><path d="M997.1 84.6h7.6" stroke="#6c6c6c" stroke-width="0.9"/>
<text x="4.5" y="134.3" font-size="12" font-weight="bold" fill="#000" textLength="190.6" lengthAdjust="spacingAndGlyphs">Function view (alphabetical order)</text>
<g transform="translate(236,126)"><rect x="0" y="0" width="2.4" height="2.2" fill="#5f7fbe"/><rect x="0" y="3.2" width="2.4" height="2.2" fill="#5f7fbe"/><rect x="0" y="6.4" width="2.4" height="2.2" fill="#5f7fbe"/><path d="M3.6 1.1h5.4M3.6 4.3h5.4M3.6 7.5h5.4" stroke="#9fb3da" stroke-width="1"/></g>
<rect x="4.5" y="138.5" width="245" height="18.4" fill="#fff" stroke="#b9b9b9"/>
<path d="M6.4 143.4h6.6v1.5l-2.3 2.2v4.5h-2v-4.5l-2.3-2.2z" fill="#8c8c8c"/>
<text x="19.7" y="152.8" font-size="12" font-weight="normal" fill="#6e6e6e" textLength="78.9" lengthAdjust="spacingAndGlyphs">Filter Functions</text>
<g transform="translate(22.8,163)"><path d="M0.5 0.5h5.7l3 3v7.5h-8.7z" fill="#eef3fc" stroke="#c5c0b0" stroke-width="1"/><path d="M6.2 0.5v3h3z" fill="#f1dfb0" stroke="#c9a55a" stroke-width="0.9"/><path d="M1.8 3.5h3.6M1.8 5.5h6M1.8 7.5h6M1.8 9.5h6" stroke="#7f9bd4" stroke-width="1.15"/></g>
<text x="37.5" y="173.7" font-size="12" font-weight="normal" fill="#111" textLength="51.6" lengthAdjust="spacingAndGlyphs">Title Page</text>
<path d="M7.2 186.5l3.2 3.1 3.2-3.1" fill="none" stroke="#444" stroke-width="1.2"/>
<g transform="translate(22.8,181)"><path d="M0.5 0.5h5.7l3 3v7.5h-8.7z" fill="#eef3fc" stroke="#c5c0b0" stroke-width="1"/><path d="M6.2 0.5v3h3z" fill="#f1dfb0" stroke="#c9a55a" stroke-width="0.9"/><path d="M1.8 3.5h3.6M1.8 5.5h6M1.8 7.5h6M1.8 9.5h6" stroke="#7f9bd4" stroke-width="1.15"/></g>
<text x="37.5" y="191.7" font-size="12" font-weight="normal" fill="#111" textLength="54.8" lengthAdjust="spacingAndGlyphs">Function_1</text>
<g transform="translate(37.8,200)"><path d="M0 1.7h12.2" stroke="#5a8cc8" stroke-width="1" fill="none"/><rect x="4.4" y="0.3" width="5.8" height="3" fill="#fff" stroke="#2f6cb5" stroke-width="1.1"/><path d="M10.2 0.3l1.8 1.4-1.8 1.5z" fill="#2f6cb5"/><path d="M0 5h6.6" stroke="#7fa6d6" stroke-width="1.5" fill="none"/><path d="M6.6 5v3.9h4.6" stroke="#5a8cc8" stroke-width="1" fill="none"/><rect x="0.7" y="7.4" width="4" height="3.2" rx="0.6" fill="#fff" stroke="#2f6cb5" stroke-width="1.3"/></g>
<text x="53.3" y="209.7" font-size="12" font-weight="normal" fill="#111" textLength="36.3" lengthAdjust="spacingAndGlyphs">Project</text>
<g transform="translate(6,386)"><rect x="0.9" y="0.5" width="4.4" height="4" fill="#eef5ff" stroke="#3f8ae0" stroke-width="1.2"/><rect x="0.9" y="7.5" width="4.4" height="4" fill="#eef5ff" stroke="#3f8ae0" stroke-width="1.2"/><path d="M6.8 2.5h4.2M6.8 9.5h4.2" stroke="#6aa4e6" stroke-width="1.3"/><path d="M7 6h3" stroke="#4a86d0" stroke-width="1.6"/></g>
<text x="22.5" y="395.9" font-size="11.5" font-weight="normal" fill="#464646" textLength="40.3" lengthAdjust="spacingAndGlyphs" stroke="#464646" stroke-width="0.6">Outline</text>
<path d="M69.2 388.6l7 7M76.2 388.6l-7 7" stroke="#111" stroke-width="1.7" fill="none"/>
<rect x="220.4" y="385.0" width="7.2" height="2.8" rx="0.9" fill="#e4e4e4" stroke="#787878" stroke-width="1"/>
<rect x="238.9" y="385.0" width="7.6" height="7.4" rx="0.7" fill="#fcfcfc" stroke="#6c6c6c" stroke-width="1"/><path d="M239.4 386.0h6.6" stroke="#c4c4c4" stroke-width="1"/><path d="M238.9 387.1h7.6" stroke="#6c6c6c" stroke-width="0.9"/>
<g><rect x="66.5" y="407.5" width="121" height="86" fill="#e3eefb" stroke="#333" stroke-width="1"/><rect x="69.5" y="410.5" width="115" height="77" fill="#e3eefb" stroke="#333" stroke-width="1"/><rect x="72.5" y="417.5" width="109" height="64" fill="#9cb8ec" stroke="#333" stroke-width="1.4"/><rect x="76.5" y="420.5" width="102" height="56" fill="#fff" stroke="#222" stroke-width="1" stroke-dasharray="2.5 1.2"/><rect x="96.5" y="424" width="59.5" height="46.5" fill="#9cb8ec" stroke="#111" stroke-width="1.3"/><rect x="100" y="427" width="52.5" height="38.5" fill="#fff" stroke="#222" stroke-width="1" stroke-dasharray="2.5 1.2"/><path d="M81 439h15.5M81 455h15.5M156 447.3h11.5M118 448.3h26M118 456h10.5q2 0 2-2v-5.5" stroke="#222" stroke-width="1" fill="none"/><path d="M80.5 439h4M80.5 455h4M163.5 447.3h4M117.5 448.3h4M117.5 456h4M139.5 448.3h4" stroke="#333" stroke-width="2.2" stroke-linecap="round"/><circle cx="130.3" cy="448.3" r="1.6" fill="#fff" stroke="#222" stroke-width="0.8"/><rect x="61.7" y="416.5" width="124.8" height="64" rx="3" fill="#c0c0f0" fill-opacity="0.4" stroke="#444" stroke-width="1"/><circle cx="66.5" cy="407.5" r="1.3" fill="#111"/><circle cx="70" cy="410.8" r="1.3" fill="#111"/><circle cx="73" cy="417.5" r="1.3" fill="#111"/><circle cx="76.8" cy="420.5" r="1.3" fill="#111"/><circle cx="97" cy="424" r="1.2" fill="#111"/><circle cx="100.3" cy="427.3" r="1.2" fill="#111"/></g>
<text x="7.7" y="513.3" font-size="12" font-weight="normal" fill="#2a2a2a" textLength="182.1" lengthAdjust="spacingAndGlyphs">EHANDBOOK_NAVIGATOR License</text>
<rect x="196.5" y="503.0" width="1.2" height="1.2" fill="#c8c8c8"/>
<rect x="196.5" y="506.2" width="1.2" height="1.2" fill="#c8c8c8"/>
<rect x="196.5" y="509.4" width="1.2" height="1.2" fill="#c8c8c8"/>
<rect x="196.5" y="512.6" width="1.2" height="1.2" fill="#c8c8c8"/>
<text x="202.7" y="513.3" font-size="12" font-weight="normal" fill="#2a2a2a" textLength="66.9" lengthAdjust="spacingAndGlyphs">Data Source:</text>
<rect x="274.5" y="500.5" width="201.5" height="16" fill="#fff" stroke="#adadad"/>
<text x="277.7" y="513.8" font-size="12" font-weight="normal" fill="#111" textLength="28.4" lengthAdjust="spacingAndGlyphs">None</text>
<path d="M464.2 507.6h5.800000000000011l-2.9000000000000057 2.9000000000000057z" fill="#333"/>
<g transform="translate(488,509.2)"><circle r="4" fill="none" stroke="#9c9c9c" stroke-width="2.4" stroke-dasharray="1.571 1.571" transform="rotate(-11)"/><circle r="3.3" fill="#9c9c9c"/><circle r="1.2" fill="#fff"/></g>
<g transform="translate(499.5,504)"><path d="M0.5 5l6-4.2 6.5 3v2.4l-6.2 3.6-6.3-3z" fill="#8a8a8a" stroke="#6e6e6e" stroke-width="0.8"/><path d="M0.5 5l6.3 2.6 6.2-3.6" fill="none" stroke="#c8c8c8" stroke-width="0.9"/></g>
<path d="M517.5 501.5v14" stroke="#777" stroke-width="1"/>
<g transform="translate(525,503.5)"><rect x="1" y="0.8" width="10" height="7" fill="#eee" stroke="#a9a9a9" stroke-width="1"/><path d="M3.5 2v4.5M8 2v4.5M2.3 4.2h2.4M6.8 4.2h2.4" stroke="#9a9a9a" stroke-width="0.9"/><rect x="0.5" y="8" width="11" height="3" fill="#ddd" stroke="#a9a9a9" stroke-width="0.9"/></g>
<g transform="translate(544,503.5)"><rect x="1" y="0.8" width="10" height="7" fill="#eee" stroke="#a9a9a9" stroke-width="1"/><path d="M3.5 2v4.5M8 2v4.5M2.3 4.2h2.4M6.8 4.2h2.4" stroke="#9a9a9a" stroke-width="0.9"/><rect x="0.5" y="8" width="11" height="3" fill="#ddd" stroke="#a9a9a9" stroke-width="0.9"/></g>
<g transform="translate(562.2,503.5)"><rect x="1" y="0.8" width="10" height="7" fill="#eee" stroke="#a9a9a9" stroke-width="1"/><path d="M3.5 2v4.5M8 2v4.5M2.3 4.2h2.4M6.8 4.2h2.4" stroke="#9a9a9a" stroke-width="0.9"/><rect x="0.5" y="8" width="11" height="3" fill="#ddd" stroke="#a9a9a9" stroke-width="0.9"/></g>
<path d="M581.5 504v10.2l9.3-5.1z" fill="#b4b4b4"/>
<rect x="600" y="504.3" width="9.3" height="9.6" rx="1" fill="#a8a8a8"/><path d="M601 506.5h7.3" stroke="#c8c8c8" stroke-width="1"/>
<rect x="615.3" y="503.0" width="1.2" height="1.2" fill="#d0d0d0"/>
<rect x="615.3" y="506.2" width="1.2" height="1.2" fill="#d0d0d0"/>
<rect x="615.3" y="509.4" width="1.2" height="1.2" fill="#d0d0d0"/>
<rect x="615.3" y="512.6" width="1.2" height="1.2" fill="#d0d0d0"/>
<rect x="2.7" y="522.5" width="1.2" height="1.2" fill="#c8c8c8"/>
<rect x="2.7" y="525.7" width="1.2" height="1.2" fill="#c8c8c8"/>
<rect x="2.7" y="528.9" width="1.2" height="1.2" fill="#c8c8c8"/>
<rect x="2.7" y="532.1" width="1.2" height="1.2" fill="#c8c8c8"/>
<g transform="translate(8,522)"><rect x="0.5" y="0.5" width="11.3" height="11" rx="0.8" fill="#eef5fc" stroke="#8c8468"/><path d="M2.5 3.5h7M2.5 5.5h7M2.5 7.5h4.5" stroke="#a9bad2" stroke-width="1"/></g>
<rect x="23.5" y="519.5" width="18" height="16" fill="#cce4fc" stroke="#a6cef6" stroke-width="1"/>
<g transform="translate(27,522)"><rect x="0.5" y="0.5" width="12.3" height="11" rx="0.8" fill="#f4f8fc" stroke="#6c6a60"/><rect x="1" y="1" width="3.8" height="10" fill="#8fa4c6"/><path d="M5.3 1v10" stroke="#5a6478" stroke-width="0.8"/><path d="M7.5 3.5h3.5M7.5 5.5h3.5M7.5 7.5h2" stroke="#a9bad2" stroke-width="1"/></g>
<g transform="translate(45.5,522)"><rect x="0.5" y="0.5" width="10.6" height="11" rx="0.8" fill="#f8fafc" stroke="#8c8468"/><circle cx="7.8" cy="6" r="1.7" fill="#6d90cc"/><path d="M5 11.2q0-3.4 2.8-3.4t2.8 3.4z" fill="#6d90cc"/></g>
<path d="M62.8 519.5v16.5" stroke="#b9b9b9" stroke-width="1.4"/>
<path d="M68 527.8h9.6" stroke="#2b3db6" stroke-width="2"/>
<path d="M86.6 527.9h9.8M91.5 523v9.9" stroke="#2b3db6" stroke-width="2"/>
<text x="104.4" y="527.2" font-size="5.6" fill="#9c9c9c" textLength="9.4" lengthAdjust="spacingAndGlyphs">100</text><text x="106.4" y="533" font-size="6.6" fill="#9c9c9c">%</text>
<g transform="translate(123.4,523)" stroke="#2b3db6" fill="#2b3db6"><path d="M1.5 1.5l7.8 7.3M9.3 1.5l-7.8 7.3" stroke-width="1.5" fill="none"/><path d="M0 0h4.2l-4.2 4.2zM10.8 0h-4.2l4.2 4.2zM0 10.3h4.2l-4.2-4.2zM10.8 10.3h-4.2l4.2-4.2z" stroke="none"/></g>
</svg>
</div>
</body>
</html>
